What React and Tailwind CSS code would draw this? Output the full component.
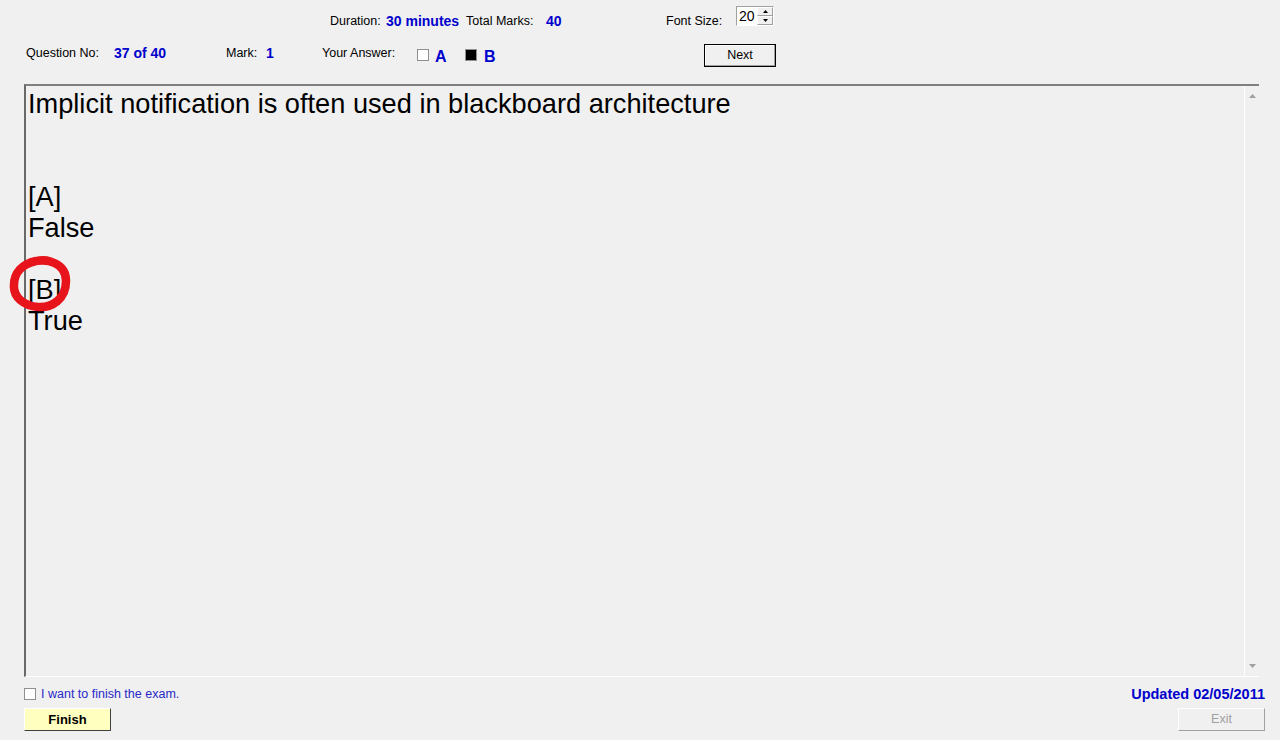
import React from 'react';

const blue = 'text-[#0000cc]';

function Spinner() {
  return (
    <div className="mt-[6px] flex h-[20px] w-[38px] border border-t-[#a0a0a0] border-l-[#a0a0a0] border-r-white border-b-white bg-white">
      <div className="flex-1 pl-[2px] text-[14px] leading-[18px] text-black">20</div>
      <div className="flex w-[16px] flex-col">
        <div className="flex flex-1 items-center justify-center border border-t-white border-l-white border-r-[#a0a0a0] border-b-[#a0a0a0] bg-[#f0f0f0]">
          <svg width="5" height="3" viewBox="0 0 5 3"><path d="M2.5 0 L5 3 L0 3 Z" fill="#000" /></svg>
        </div>
        <div className="flex flex-1 items-center justify-center border border-t-white border-l-white border-r-[#a0a0a0] border-b-[#a0a0a0] bg-[#f0f0f0]">
          <svg width="5" height="3" viewBox="0 0 5 3"><path d="M0 0 L5 0 L2.5 3 Z" fill="#000" /></svg>
        </div>
      </div>
    </div>
  );
}

function Box({ checked }) {
  return (
    <div className="mt-[15px] flex h-[12px] w-[12px] items-center justify-center border border-[#8f8f8f] bg-white">
      {checked && <div className="h-[10px] w-[10px] bg-black" />}
    </div>
  );
}

function WinButton({ children, className = '' }) {
  return (
    <div
      className={`flex h-[23px] w-[87px] items-center justify-center border border-t-white border-l-white border-r-[#404040] border-b-[#404040] ${className}`}
    >
      {children}
    </div>
  );
}

export default function App() {
  return (
    <div
      className="relative h-[740px] w-[1280px] overflow-hidden bg-[#f0f0f0] text-[12.5px] text-black"
      style={{ fontFamily: '"Liberation Sans", Arial, sans-serif' }}
    >
      {/* header line 1 */}
      <div className="flex h-[34px] pl-[330px]">
        <span className="mt-[13px] w-[56px] leading-[16px]">Duration:</span>
        <span className={`mt-[13px] w-[80px] text-[14px] font-bold leading-[16px] ${blue}`}>30 minutes</span>
        <span className="mt-[13px] w-[80px] leading-[16px]">Total Marks:</span>
        <span className={`mt-[13px] w-[120px] text-[14px] font-bold leading-[16px] ${blue}`}>40</span>
        <span className="mt-[13px] w-[70px] leading-[16px]">Font Size:</span>
        <Spinner />
      </div>

      {/* header line 2 */}
      <div className="flex h-[50px] pl-[26px]">
        <span className="mt-[11px] w-[88px] leading-[16px]">Question No:</span>
        <span className={`mt-[11px] w-[112px] text-[14px] font-bold leading-[16px] ${blue}`}>37 of 40</span>
        <span className="mt-[11px] w-[40px] leading-[16px]">Mark:</span>
        <span className={`mt-[11px] w-[56px] text-[14px] font-bold leading-[16px] ${blue}`}>1</span>
        <span className="mt-[11px] w-[95px] leading-[16px]">Your Answer:</span>
        <Box />
        <span className={`ml-[6px] mt-[14px] w-[30px] text-[16px] font-bold leading-[18px] ${blue}`}>A</span>
        <Box checked />
        <span className={`ml-[7px] mt-[14px] w-[220px] text-[16px] font-bold leading-[18px] ${blue}`}>B</span>
        <div className="mt-[10px] flex h-[23px] w-[72px] items-center justify-center border border-black bg-[#f0f0f0] shadow-[inset_-1px_-1px_0_#a0a0a0,inset_1px_1px_0_#ffffff]">
          Next
        </div>
      </div>

      {/* question area */}
      <div className="ml-[24px] flex h-[593px] w-[1235px] border-t-2 border-l-2 border-t-[#808080] border-l-[#696969] border-b border-b-white">
        <div className="flex-1 whitespace-pre pl-[2px] pt-[2px] text-[27.2px] leading-[31px] text-black">
{`Implicit notification is often used in blackboard architecture


[A]
False

[B]
True`}
        </div>
        <div className="flex w-[15px] flex-col items-center justify-between border-l border-white py-[8px]">
          <svg width="7" height="4" viewBox="0 0 7 4"><path d="M3.5 0 L7 4 L0 4 Z" fill="#a0a0a0" /></svg>
          <svg width="7" height="4" viewBox="0 0 7 4"><path d="M0 0 L7 0 L3.5 4 Z" fill="#a0a0a0" /></svg>
        </div>
      </div>

      {/* red hand-drawn circle */}
      <svg className="absolute left-[8px] top-[255px]" width="66" height="60" viewBox="0 0 66 60">
        <path
          d="M24 7 C40 3 58 8 58 26 C58 44 44 53 30 52 C16 51 5 42 6 30 C6 18 14 9 28 6 C36 4 44 6 50 10"
          fill="none"
          stroke="#e8141c"
          strokeWidth="8.5"
          strokeLinecap="round"
        />
      </svg>

      {/* bottom */}
      <div className="flex justify-between pl-[24px] pr-[15px] pt-[11px]">
        <div className="flex flex-col">
          <div className="flex h-[12px] items-center">
            <div className="h-[12px] w-[12px] border border-[#8f8f8f] bg-white" />
            <span className="ml-[5px] leading-[14px] text-[#2828c8]">I want to finish the exam.</span>
          </div>
          <WinButton className="mt-[8px] bg-[#ffffc0] text-[13px] font-bold">Finish</WinButton>
        </div>
        <div className="flex flex-col items-end">
          <span className={`h-[12px] text-[14.5px] font-bold leading-[12px] ${blue}`}>Updated 02/05/2011</span>
          <WinButton className="mt-[8px] text-[#a0a0a0] border-r-[#a0a0a0] border-b-[#a0a0a0]">Exit</WinButton>
        </div>
      </div>
    </div>
  );
}
